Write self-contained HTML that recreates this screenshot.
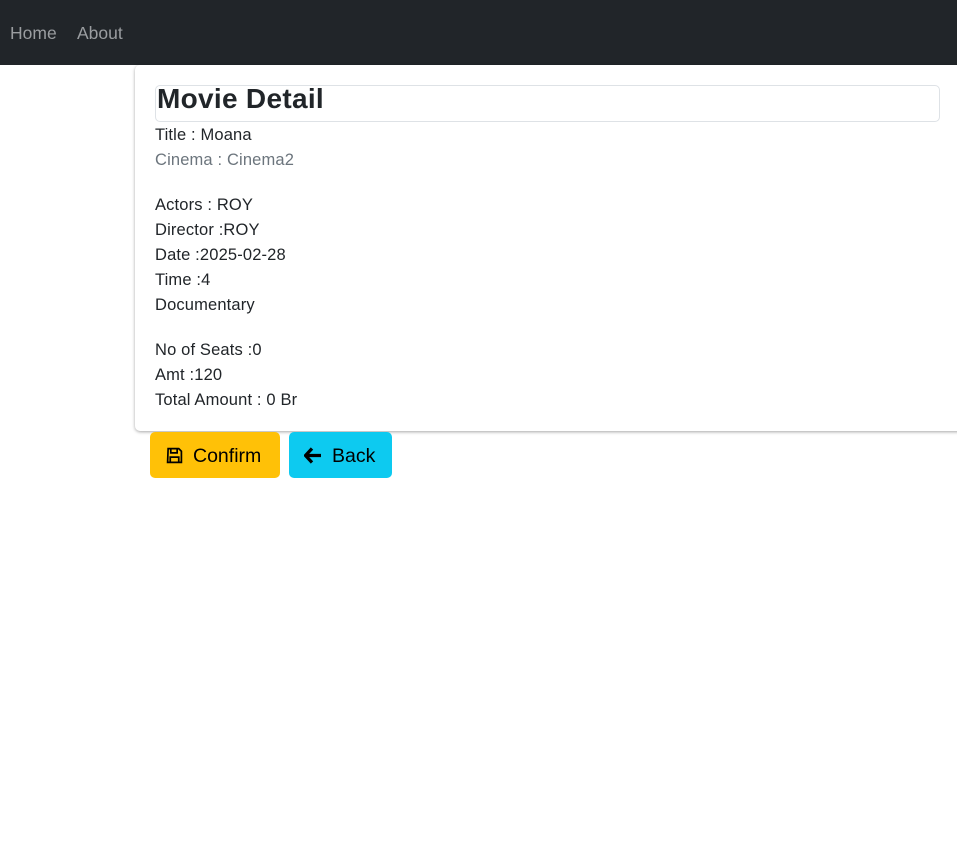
<!DOCTYPE html>
<html><head><style>
body{margin:0;font-family:"Liberation Sans",sans-serif;color:#212529;background:#fff;width:957px;height:856px;position:relative;overflow:hidden}
.nav{height:65px;background:#212529}
.card{position:absolute;left:135px;top:65px;width:830px;height:366px;border-radius:5px;box-shadow:0 1px 3px rgba(0,0,0,.35);background:#fff}
.hd{position:absolute;left:155px;top:85px;width:783px;height:35px;border:1px solid #dee2e6;border-radius:5px}
.hd span{position:absolute;left:1px;top:-3px;font-size:28px;font-weight:bold;color:#212529;letter-spacing:0.3px}
.l{position:absolute;left:155px;font-size:16.5px;letter-spacing:0.15px}
.btn{position:absolute;top:432px;height:46px;border-radius:5px;font-size:19.5px;color:#000}
</style></head><body>
<div class="nav"></div>
<a style="position:absolute;left:10px;top:23px;color:#9a9da0;font-size:17.5px">Home</a>
<a style="position:absolute;left:77px;top:23px;color:#9a9da0;font-size:17.5px">About</a>
<div class="card"></div>
<div class="hd"><span>Movie Detail</span></div>
<div class="l" style="top:126px">Title : Moana</div>
<div class="l" style="top:151px;color:#6c757d">Cinema : Cinema2</div>
<div class="l" style="top:196px">Actors : ROY</div>
<div class="l" style="top:221px">Director :ROY</div>
<div class="l" style="top:246px">Date :2025-02-28</div>
<div class="l" style="top:271px">Time :4</div>
<div class="l" style="top:296px">Documentary</div>
<div class="l" style="top:341px">No of Seats :0</div>
<div class="l" style="top:366px">Amt :120</div>
<div class="l" style="top:391px">Total Amount : 0 Br</div>
<div class="btn" style="left:150px;width:130px;background:#ffc107">
<svg style="position:absolute;left:16px;top:15px" width="17" height="17" viewBox="0 0 16 16" fill="none" stroke="#000" stroke-width="1.6"><path d="M2 1.5h10l2.5 2.5v10.5h-13z"/><path d="M4.5 1.5v4h6v-4"/><path d="M4 14.5v-5h8v5"/></svg>
<span style="position:absolute;left:43px;top:13px">Confirm</span></div>
<div class="btn" style="left:289px;width:103px;background:#0dcaf0">
<svg style="position:absolute;left:15px;top:15px" width="18" height="17" viewBox="0 0 18 17"><path d="M8 1.5L1.5 8.5 8 15.5M2 8.5h15" stroke="#000" stroke-width="3.2" fill="none" stroke-linejoin="round"/></svg>
<span style="position:absolute;left:43px;top:13px">Back</span></div>
</body></html>
